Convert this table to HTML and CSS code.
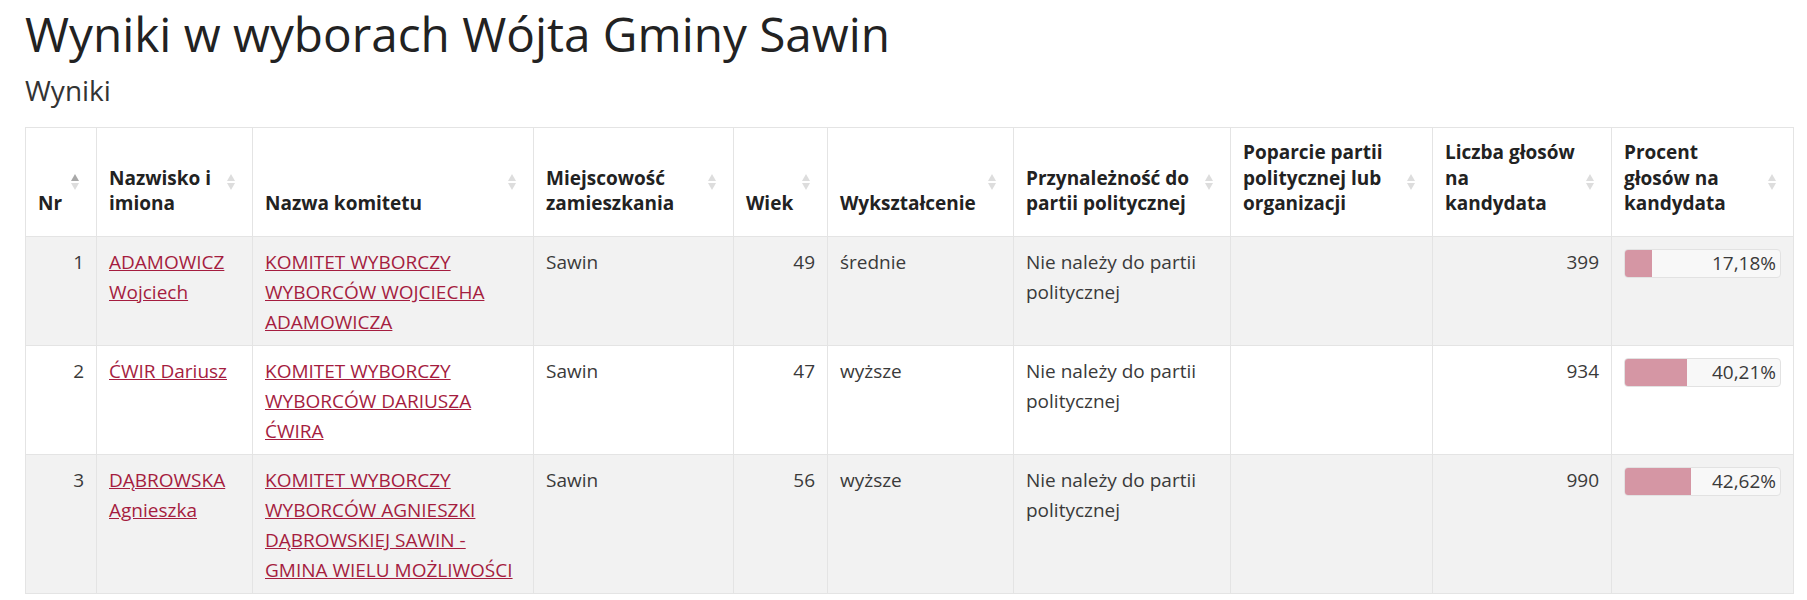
FILE: index.html
```html
<!DOCTYPE html>
<html lang="pl">
<head>
<meta charset="utf-8">
<title>Wyniki w wyborach Wójta Gminy Sawin</title>
<link rel="stylesheet" href="styles.css">
</head>
<body>
<div class="page">
  <h1 class="title">Wyniki w wyborach Wójta Gminy Sawin</h1>
  <h2 class="subtitle">Wyniki</h2>
  <table class="results">
    <colgroup>
      <col style="width:71px">
      <col style="width:156px">
      <col style="width:281px">
      <col style="width:200px">
      <col style="width:94px">
      <col style="width:186px">
      <col style="width:217px">
      <col style="width:202px">
      <col style="width:179px">
      <col style="width:182px">
    </colgroup>
    <thead>
      <tr>
        <th class="sort asc">Nr</th>
        <th class="sort">Nazwisko i<br>imiona</th>
        <th class="sort">Nazwa komitetu</th>
        <th class="sort">Miejscowość<br>zamieszkania</th>
        <th class="sort">Wiek</th>
        <th class="sort">Wykształcenie</th>
        <th class="sort">Przynależność do<br>partii politycznej</th>
        <th class="sort">Poparcie partii<br>politycznej lub<br>organizacji</th>
        <th class="sort">Liczba głosów<br>na<br>kandydata</th>
        <th class="sort">Procent<br>głosów na<br>kandydata</th>
      </tr>
    </thead>
    <tbody>
      <tr class="odd">
        <td class="num">1</td>
        <td><a href="#">ADAMOWICZ Wojciech</a></td>
        <td><a href="#">KOMITET WYBORCZY WYBORCÓW WOJCIECHA ADAMOWICZA</a></td>
        <td>Sawin</td>
        <td class="num">49</td>
        <td>średnie</td>
        <td>Nie należy do partii politycznej</td>
        <td></td>
        <td class="num">399</td>
        <td><div class="bar"><div class="fill" style="width:17.18%"></div><span class="bar-label">17,18%</span></div></td>
      </tr>
      <tr class="even">
        <td class="num">2</td>
        <td><a href="#">ĆWIR Dariusz</a></td>
        <td><a href="#">KOMITET WYBORCZY WYBORCÓW DARIUSZA ĆWIRA</a></td>
        <td>Sawin</td>
        <td class="num">47</td>
        <td>wyższe</td>
        <td>Nie należy do partii politycznej</td>
        <td></td>
        <td class="num">934</td>
        <td><div class="bar"><div class="fill" style="width:40.21%"></div><span class="bar-label">40,21%</span></div></td>
      </tr>
      <tr class="odd">
        <td class="num">3</td>
        <td><a href="#">DĄBROWSKA Agnieszka</a></td>
        <td><a href="#">KOMITET WYBORCZY WYBORCÓW AGNIESZKI DĄBROWSKIEJ SAWIN - GMINA WIELU MOŻLIWOŚCI</a></td>
        <td>Sawin</td>
        <td class="num">56</td>
        <td>wyższe</td>
        <td>Nie należy do partii politycznej</td>
        <td></td>
        <td class="num">990</td>
        <td><div class="bar"><div class="fill" style="width:42.62%"></div><span class="bar-label">42,62%</span></div></td>
      </tr>
    </tbody>
  </table>
</div>
</body>
</html>
```

FILE: styles.css
```css
html, body {
  margin: 0;
  padding: 0;
  background: #ffffff;
}

body {
  font-family: "Open Sans", "Noto Sans", sans-serif;
  color: #333333;
}

.page {
  padding: 8px 14px 0 25px;
}

.title {
  margin: 0;
  font-size: 47.7px;
  font-weight: 400;
  line-height: 1.1;
  color: #222222;
}

.subtitle {
  margin: 15px 0 0 0;
  font-size: 28px;
  font-weight: 400;
  line-height: 1.1;
  color: #333333;
}

.results {
  margin-top: 21px;
  width: 1768px;
  table-layout: fixed;
  border-collapse: collapse;
  border: 1px solid #e4e4e4;
  font-size: 19px;
}

.results th,
.results td {
  border: 1px solid #e4e4e4;
  text-align: left;
}

.results th {
  position: relative;
  padding: 12px 30px 19px 12px;
  line-height: 25.5px;
  font-weight: 700;
  color: #222222;
  vertical-align: bottom;
  background: #ffffff;
  white-space: nowrap;
}

.results th.sort::before,
.results th.sort::after {
  content: "";
  position: absolute;
  right: 17px;
  width: 0;
  height: 0;
  border-left: 4px solid transparent;
  border-right: 4px solid transparent;
}

.results th.sort::before {
  top: calc(50% - 8px);
  border-bottom: 7px solid #dddddd;
}

.results th.sort::after {
  top: calc(50% + 1px);
  border-top: 7px solid #dddddd;
}

.results th.asc::before {
  border-bottom-color: #a8a8a8;
}

.results td {
  padding: 10px 12px 8px 12px;
  line-height: 30px;
  vertical-align: top;
  color: #3a3a3a;
}

.results tr.odd td {
  background: #f2f2f2;
}

.results tr.even td {
  background: #ffffff;
}

.results td.num {
  text-align: right;
}

.results a {
  color: #a51d3f;
  text-decoration: underline;
}

.bar {
  display: grid;
  margin-top: 2px;
  height: 27px;
  border: 1px solid #e2e2e2;
  border-radius: 4px;
  background: #f8f8f8;
  overflow: hidden;
}

.fill {
  grid-area: 1 / 1;
  height: 100%;
  background: #d596a4;
}

.bar-label {
  grid-area: 1 / 1;
  justify-self: end;
  padding-right: 4px;
  line-height: 27px;
  color: #3a3a3a;
}
```
